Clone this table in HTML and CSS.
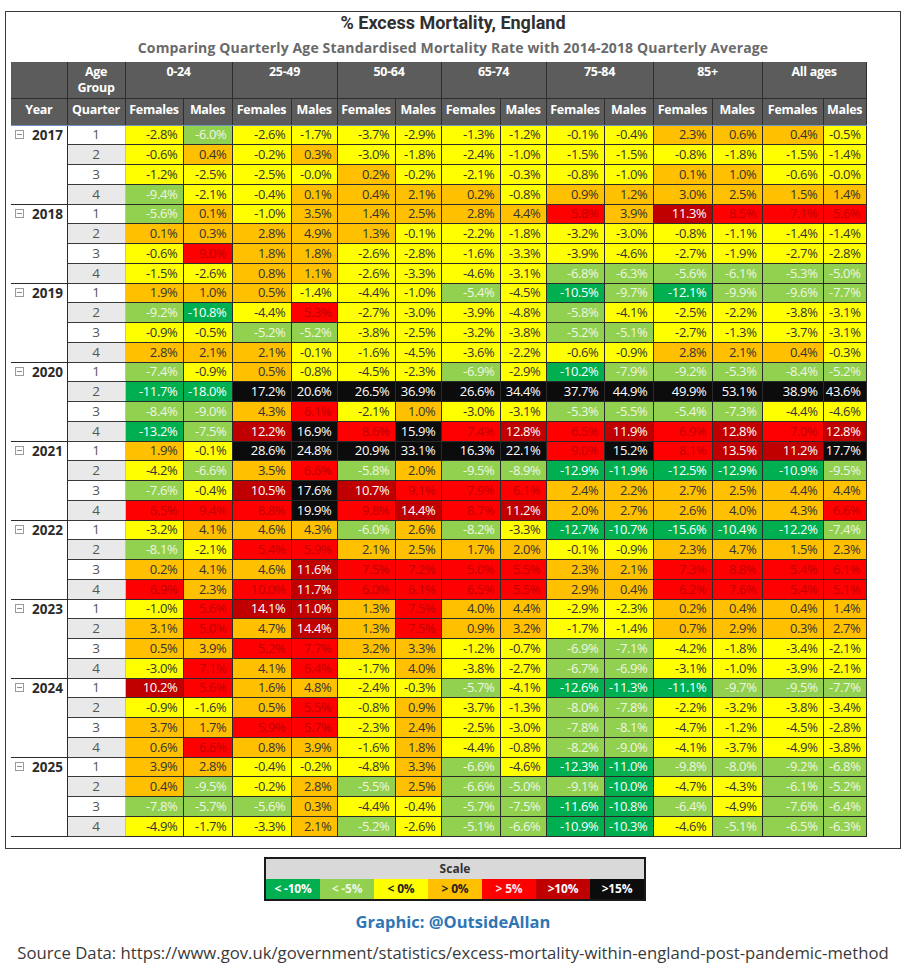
FILE: index.html
```html
<!DOCTYPE html>
<html lang="en">
<head>
<meta charset="utf-8">
<title>% Excess Mortality, England</title>
<link rel="stylesheet" href="styles.css">
</head>
<body>
<div class="page">
  <div class="frame">
    <div class="title">% Excess Mortality, England</div>
    <div class="subtitle">Comparing Quarterly Age Standardised Mortality Rate with 2014-2018 Quarterly Average</div>
    <table class="grid">
      <colgroup>
        <col class="c-year"><col class="c-qtr">
        <col class="w58"><col class="w49">
        <col class="w59"><col class="w46">
        <col class="w58"><col class="w46">
        <col class="w59"><col class="w46">
        <col class="w58"><col class="w49">
        <col class="w59"><col class="w50">
        <col class="w61"><col class="w43">
      </colgroup>
      <thead>
        <tr class="h1">
          <th class="blank"></th><th>Age<br>Group</th>
          <th colspan="2">0-24</th><th colspan="2">25-49</th><th colspan="2">50-64</th>
          <th colspan="2">65-74</th><th colspan="2">75-84</th><th colspan="2">85+</th><th colspan="2">All ages</th>
        </tr>
        <tr class="h2">
          <th class="blank2">Year</th><th>Quarter</th>
          <th>Females</th><th>Males</th><th>Females</th><th>Males</th><th>Females</th><th>Males</th>
          <th>Females</th><th>Males</th><th>Females</th><th>Males</th><th>Females</th><th>Males</th><th>Females</th><th>Males</th>
        </tr>
      </thead>
      <tbody>
        <tr class="first"><td class="yr" rowspan="4"><span class="tog"><svg width="9" height="9" viewBox="0 0 9 9"><rect x="0.5" y="0.5" width="8" height="8" fill="none" stroke="#9a9a9a"/><line x1="2" y1="4.5" x2="7" y2="4.5" stroke="#8a8a8a"/></svg></span>2017</td><td class="qt">1</td><td class="y">-2.8%</td><td class="g1">-6.0%</td><td class="y">-2.6%</td><td class="y">-1.7%</td><td class="y">-3.7%</td><td class="y">-2.9%</td><td class="y">-1.3%</td><td class="y">-1.2%</td><td class="y">-0.1%</td><td class="y">-0.4%</td><td class="o">2.3%</td><td class="o">0.6%</td><td class="o">0.4%</td><td class="y">-0.5%</td></tr>
        <tr><td class="qt alt">2</td><td class="y">-0.6%</td><td class="o">0.4%</td><td class="y">-0.2%</td><td class="o">0.3%</td><td class="y">-3.0%</td><td class="y">-1.8%</td><td class="y">-2.4%</td><td class="y">-1.0%</td><td class="y">-1.5%</td><td class="y">-1.5%</td><td class="y">-0.8%</td><td class="y">-1.8%</td><td class="y">-1.5%</td><td class="y">-1.4%</td></tr>
        <tr><td class="qt">3</td><td class="y">-1.2%</td><td class="y">-2.5%</td><td class="y">-2.5%</td><td class="y">-0.0%</td><td class="o">0.2%</td><td class="y">-0.2%</td><td class="y">-2.1%</td><td class="y">-0.3%</td><td class="y">-0.8%</td><td class="y">-1.0%</td><td class="o">0.1%</td><td class="o">1.0%</td><td class="y">-0.6%</td><td class="y">-0.0%</td></tr>
        <tr class="last"><td class="qt alt">4</td><td class="g1">-9.4%</td><td class="y">-2.1%</td><td class="y">-0.4%</td><td class="o">0.1%</td><td class="o">0.4%</td><td class="o">2.1%</td><td class="o">0.2%</td><td class="y">-0.8%</td><td class="o">0.9%</td><td class="o">1.2%</td><td class="o">3.0%</td><td class="o">2.5%</td><td class="o">1.5%</td><td class="o">1.4%</td></tr>

        <tr><td class="yr" rowspan="4"><span class="tog"><svg width="9" height="9" viewBox="0 0 9 9"><rect x="0.5" y="0.5" width="8" height="8" fill="none" stroke="#9a9a9a"/><line x1="2" y1="4.5" x2="7" y2="4.5" stroke="#8a8a8a"/></svg></span>2018</td><td class="qt">1</td><td class="g1">-5.6%</td><td class="o">0.1%</td><td class="y">-1.0%</td><td class="o">3.5%</td><td class="o">1.4%</td><td class="o">2.5%</td><td class="o">2.8%</td><td class="o">4.4%</td><td class="r">5.8%</td><td class="o">3.9%</td><td class="dr">11.3%</td><td class="r">8.5%</td><td class="r">7.1%</td><td class="r">5.6%</td></tr>
        <tr><td class="qt alt">2</td><td class="o">0.1%</td><td class="o">0.3%</td><td class="o">2.8%</td><td class="o">4.9%</td><td class="o">1.3%</td><td class="y">-0.1%</td><td class="y">-2.2%</td><td class="y">-1.8%</td><td class="y">-3.2%</td><td class="y">-3.0%</td><td class="y">-0.8%</td><td class="y">-1.1%</td><td class="y">-1.4%</td><td class="y">-1.4%</td></tr>
        <tr><td class="qt">3</td><td class="y">-0.6%</td><td class="r">9.0%</td><td class="o">1.8%</td><td class="o">1.8%</td><td class="y">-2.6%</td><td class="y">-2.8%</td><td class="y">-1.6%</td><td class="y">-3.3%</td><td class="y">-3.9%</td><td class="y">-4.6%</td><td class="y">-2.7%</td><td class="y">-1.9%</td><td class="y">-2.7%</td><td class="y">-2.8%</td></tr>
        <tr class="last"><td class="qt alt">4</td><td class="y">-1.5%</td><td class="y">-2.6%</td><td class="o">0.8%</td><td class="o">1.1%</td><td class="y">-2.6%</td><td class="y">-3.3%</td><td class="y">-4.6%</td><td class="y">-3.1%</td><td class="g1">-6.8%</td><td class="g1">-6.3%</td><td class="g1">-5.6%</td><td class="g1">-6.1%</td><td class="g1">-5.3%</td><td class="g1">-5.0%</td></tr>

        <tr><td class="yr" rowspan="4"><span class="tog"><svg width="9" height="9" viewBox="0 0 9 9"><rect x="0.5" y="0.5" width="8" height="8" fill="none" stroke="#9a9a9a"/><line x1="2" y1="4.5" x2="7" y2="4.5" stroke="#8a8a8a"/></svg></span>2019</td><td class="qt">1</td><td class="o">1.9%</td><td class="o">1.0%</td><td class="o">0.5%</td><td class="y">-1.4%</td><td class="y">-4.4%</td><td class="y">-1.0%</td><td class="g1">-5.4%</td><td class="y">-4.5%</td><td class="g2">-10.5%</td><td class="g1">-9.7%</td><td class="g2">-12.1%</td><td class="g1">-9.9%</td><td class="g1">-9.6%</td><td class="g1">-7.7%</td></tr>
        <tr><td class="qt alt">2</td><td class="g1">-9.2%</td><td class="g2">-10.8%</td><td class="y">-4.4%</td><td class="r">5.3%</td><td class="y">-2.7%</td><td class="y">-3.0%</td><td class="y">-3.9%</td><td class="y">-4.8%</td><td class="g1">-5.8%</td><td class="y">-4.1%</td><td class="y">-2.5%</td><td class="y">-2.2%</td><td class="y">-3.8%</td><td class="y">-3.1%</td></tr>
        <tr><td class="qt">3</td><td class="y">-0.9%</td><td class="y">-0.5%</td><td class="g1">-5.2%</td><td class="g1">-5.2%</td><td class="y">-3.8%</td><td class="y">-2.5%</td><td class="y">-3.2%</td><td class="y">-3.8%</td><td class="g1">-5.2%</td><td class="g1">-5.1%</td><td class="y">-2.7%</td><td class="y">-1.3%</td><td class="y">-3.7%</td><td class="y">-3.1%</td></tr>
        <tr class="last"><td class="qt alt">4</td><td class="o">2.8%</td><td class="o">2.1%</td><td class="o">2.1%</td><td class="y">-0.1%</td><td class="y">-1.6%</td><td class="y">-4.5%</td><td class="y">-3.6%</td><td class="y">-2.2%</td><td class="y">-0.6%</td><td class="y">-0.9%</td><td class="o">2.8%</td><td class="o">2.1%</td><td class="o">0.4%</td><td class="y">-0.3%</td></tr>

        <tr><td class="yr" rowspan="4"><span class="tog"><svg width="9" height="9" viewBox="0 0 9 9"><rect x="0.5" y="0.5" width="8" height="8" fill="none" stroke="#9a9a9a"/><line x1="2" y1="4.5" x2="7" y2="4.5" stroke="#8a8a8a"/></svg></span>2020</td><td class="qt">1</td><td class="g1">-7.4%</td><td class="y">-0.9%</td><td class="o">0.5%</td><td class="y">-0.8%</td><td class="y">-4.5%</td><td class="y">-2.3%</td><td class="g1">-6.9%</td><td class="y">-2.9%</td><td class="g2">-10.2%</td><td class="g1">-7.9%</td><td class="g1">-9.2%</td><td class="g1">-5.3%</td><td class="g1">-8.4%</td><td class="g1">-5.2%</td></tr>
        <tr><td class="qt alt">2</td><td class="g2">-11.7%</td><td class="g2">-18.0%</td><td class="k">17.2%</td><td class="k">20.6%</td><td class="k">26.5%</td><td class="k">36.9%</td><td class="k">26.6%</td><td class="k">34.4%</td><td class="k">37.7%</td><td class="k">44.9%</td><td class="k">49.9%</td><td class="k">53.1%</td><td class="k">38.9%</td><td class="k">43.6%</td></tr>
        <tr><td class="qt">3</td><td class="g1">-8.4%</td><td class="g1">-9.0%</td><td class="o">4.3%</td><td class="r">6.1%</td><td class="y">-2.1%</td><td class="o">1.0%</td><td class="y">-3.0%</td><td class="y">-3.1%</td><td class="g1">-5.3%</td><td class="g1">-5.5%</td><td class="g1">-5.4%</td><td class="g1">-7.3%</td><td class="y">-4.4%</td><td class="y">-4.6%</td></tr>
        <tr class="last"><td class="qt alt">4</td><td class="g2">-13.2%</td><td class="g1">-7.5%</td><td class="dr">12.2%</td><td class="k">16.9%</td><td class="r">8.6%</td><td class="k">15.9%</td><td class="r">7.4%</td><td class="dr">12.8%</td><td class="r">6.5%</td><td class="dr">11.9%</td><td class="r">6.9%</td><td class="dr">12.8%</td><td class="r">7.0%</td><td class="dr">12.8%</td></tr>

        <tr><td class="yr" rowspan="4"><span class="tog"><svg width="9" height="9" viewBox="0 0 9 9"><rect x="0.5" y="0.5" width="8" height="8" fill="none" stroke="#9a9a9a"/><line x1="2" y1="4.5" x2="7" y2="4.5" stroke="#8a8a8a"/></svg></span>2021</td><td class="qt">1</td><td class="o">1.9%</td><td class="y">-0.1%</td><td class="k">28.6%</td><td class="k">24.8%</td><td class="k">20.9%</td><td class="k">33.1%</td><td class="k">16.3%</td><td class="k">22.1%</td><td class="r">9.0%</td><td class="k">15.2%</td><td class="r">8.1%</td><td class="dr">13.5%</td><td class="dr">11.2%</td><td class="k">17.7%</td></tr>
        <tr><td class="qt alt">2</td><td class="y">-4.2%</td><td class="g1">-6.6%</td><td class="o">3.5%</td><td class="r">6.6%</td><td class="g1">-5.8%</td><td class="o">2.0%</td><td class="g1">-9.5%</td><td class="g1">-8.9%</td><td class="g2">-12.9%</td><td class="g2">-11.9%</td><td class="g2">-12.5%</td><td class="g2">-12.9%</td><td class="g2">-10.9%</td><td class="g1">-9.5%</td></tr>
        <tr><td class="qt">3</td><td class="g1">-7.6%</td><td class="y">-0.4%</td><td class="dr">10.5%</td><td class="k">17.6%</td><td class="dr">10.7%</td><td class="r">9.1%</td><td class="r">7.9%</td><td class="r">6.1%</td><td class="o">2.4%</td><td class="o">2.2%</td><td class="o">2.7%</td><td class="o">2.5%</td><td class="o">4.4%</td><td class="o">4.4%</td></tr>
        <tr class="last"><td class="qt alt">4</td><td class="r">6.5%</td><td class="r">9.4%</td><td class="r">8.8%</td><td class="k">19.9%</td><td class="r">9.8%</td><td class="dr">14.4%</td><td class="r">8.7%</td><td class="dr">11.2%</td><td class="o">2.0%</td><td class="o">2.7%</td><td class="o">2.6%</td><td class="o">4.0%</td><td class="o">4.3%</td><td class="r">6.6%</td></tr>

        <tr><td class="yr" rowspan="4"><span class="tog"><svg width="9" height="9" viewBox="0 0 9 9"><rect x="0.5" y="0.5" width="8" height="8" fill="none" stroke="#9a9a9a"/><line x1="2" y1="4.5" x2="7" y2="4.5" stroke="#8a8a8a"/></svg></span>2022</td><td class="qt">1</td><td class="y">-3.2%</td><td class="o">4.1%</td><td class="o">4.6%</td><td class="o">4.3%</td><td class="g1">-6.0%</td><td class="o">2.6%</td><td class="g1">-8.2%</td><td class="y">-3.3%</td><td class="g2">-12.7%</td><td class="g2">-10.7%</td><td class="g2">-15.6%</td><td class="g2">-10.4%</td><td class="g2">-12.2%</td><td class="g1">-7.4%</td></tr>
        <tr><td class="qt alt">2</td><td class="g1">-8.1%</td><td class="y">-2.1%</td><td class="r">5.4%</td><td class="r">5.9%</td><td class="o">2.1%</td><td class="o">2.5%</td><td class="o">1.7%</td><td class="o">2.0%</td><td class="y">-0.1%</td><td class="y">-0.9%</td><td class="o">2.3%</td><td class="o">4.7%</td><td class="o">1.5%</td><td class="o">2.3%</td></tr>
        <tr><td class="qt">3</td><td class="o">0.2%</td><td class="o">4.1%</td><td class="o">4.6%</td><td class="dr">11.6%</td><td class="r">7.5%</td><td class="r">7.2%</td><td class="r">5.0%</td><td class="r">5.5%</td><td class="o">2.3%</td><td class="o">2.1%</td><td class="r">7.3%</td><td class="r">8.8%</td><td class="r">5.4%</td><td class="r">6.1%</td></tr>
        <tr class="last"><td class="qt alt">4</td><td class="r">6.9%</td><td class="o">2.3%</td><td class="r">10.0%</td><td class="dr">11.7%</td><td class="r">6.0%</td><td class="r">6.1%</td><td class="r">6.5%</td><td class="r">5.5%</td><td class="o">2.9%</td><td class="o">0.4%</td><td class="r">6.2%</td><td class="r">7.6%</td><td class="r">5.4%</td><td class="r">5.1%</td></tr>

        <tr><td class="yr" rowspan="4"><span class="tog"><svg width="9" height="9" viewBox="0 0 9 9"><rect x="0.5" y="0.5" width="8" height="8" fill="none" stroke="#9a9a9a"/><line x1="2" y1="4.5" x2="7" y2="4.5" stroke="#8a8a8a"/></svg></span>2023</td><td class="qt">1</td><td class="y">-1.0%</td><td class="r">5.6%</td><td class="dr">14.1%</td><td class="dr">11.0%</td><td class="o">1.3%</td><td class="r">7.5%</td><td class="o">4.0%</td><td class="o">4.4%</td><td class="y">-2.9%</td><td class="y">-2.3%</td><td class="o">0.2%</td><td class="o">0.4%</td><td class="o">0.4%</td><td class="o">1.4%</td></tr>
        <tr><td class="qt alt">2</td><td class="o">3.1%</td><td class="r">5.0%</td><td class="o">4.7%</td><td class="dr">14.4%</td><td class="o">1.3%</td><td class="r">7.5%</td><td class="o">0.9%</td><td class="o">3.2%</td><td class="y">-1.7%</td><td class="y">-1.4%</td><td class="o">0.7%</td><td class="o">2.9%</td><td class="o">0.3%</td><td class="o">2.7%</td></tr>
        <tr><td class="qt">3</td><td class="o">0.5%</td><td class="o">3.9%</td><td class="r">5.2%</td><td class="r">7.7%</td><td class="o">3.2%</td><td class="o">3.3%</td><td class="y">-1.2%</td><td class="y">-0.7%</td><td class="g1">-6.9%</td><td class="g1">-7.1%</td><td class="y">-4.2%</td><td class="y">-1.8%</td><td class="y">-3.4%</td><td class="y">-2.1%</td></tr>
        <tr class="last"><td class="qt alt">4</td><td class="y">-3.0%</td><td class="r">7.1%</td><td class="o">4.1%</td><td class="r">6.4%</td><td class="y">-1.7%</td><td class="o">4.0%</td><td class="y">-3.8%</td><td class="y">-2.7%</td><td class="g1">-6.7%</td><td class="g1">-6.9%</td><td class="y">-3.1%</td><td class="y">-1.0%</td><td class="y">-3.9%</td><td class="y">-2.1%</td></tr>

        <tr><td class="yr" rowspan="4"><span class="tog"><svg width="9" height="9" viewBox="0 0 9 9"><rect x="0.5" y="0.5" width="8" height="8" fill="none" stroke="#9a9a9a"/><line x1="2" y1="4.5" x2="7" y2="4.5" stroke="#8a8a8a"/></svg></span>2024</td><td class="qt">1</td><td class="dr">10.2%</td><td class="r">5.6%</td><td class="o">1.6%</td><td class="o">4.8%</td><td class="y">-2.4%</td><td class="y">-0.3%</td><td class="g1">-5.7%</td><td class="y">-4.1%</td><td class="g2">-12.6%</td><td class="g2">-11.3%</td><td class="g2">-11.1%</td><td class="g1">-9.7%</td><td class="g1">-9.5%</td><td class="g1">-7.7%</td></tr>
        <tr><td class="qt alt">2</td><td class="y">-0.9%</td><td class="y">-1.6%</td><td class="o">0.5%</td><td class="r">5.5%</td><td class="y">-0.8%</td><td class="o">0.9%</td><td class="y">-3.7%</td><td class="y">-1.3%</td><td class="g1">-8.0%</td><td class="g1">-7.8%</td><td class="y">-2.2%</td><td class="y">-3.2%</td><td class="y">-3.8%</td><td class="y">-3.4%</td></tr>
        <tr><td class="qt">3</td><td class="o">3.7%</td><td class="o">1.7%</td><td class="r">5.9%</td><td class="r">5.7%</td><td class="y">-2.3%</td><td class="o">2.4%</td><td class="y">-2.5%</td><td class="y">-3.0%</td><td class="g1">-7.8%</td><td class="g1">-8.1%</td><td class="y">-4.7%</td><td class="y">-1.2%</td><td class="y">-4.5%</td><td class="y">-2.8%</td></tr>
        <tr class="last"><td class="qt alt">4</td><td class="o">0.6%</td><td class="r">6.6%</td><td class="o">0.8%</td><td class="o">3.9%</td><td class="y">-1.6%</td><td class="o">1.8%</td><td class="y">-4.4%</td><td class="y">-0.8%</td><td class="g1">-8.2%</td><td class="g1">-9.0%</td><td class="y">-4.1%</td><td class="y">-3.7%</td><td class="y">-4.9%</td><td class="y">-3.8%</td></tr>

        <tr><td class="yr" rowspan="4"><span class="tog"><svg width="9" height="9" viewBox="0 0 9 9"><rect x="0.5" y="0.5" width="8" height="8" fill="none" stroke="#9a9a9a"/><line x1="2" y1="4.5" x2="7" y2="4.5" stroke="#8a8a8a"/></svg></span>2025</td><td class="qt">1</td><td class="o">3.9%</td><td class="o">2.8%</td><td class="y">-0.4%</td><td class="y">-0.2%</td><td class="y">-4.8%</td><td class="o">3.3%</td><td class="g1">-6.6%</td><td class="y">-4.6%</td><td class="g2">-12.3%</td><td class="g2">-11.0%</td><td class="g1">-9.8%</td><td class="g1">-8.0%</td><td class="g1">-9.2%</td><td class="g1">-6.8%</td></tr>
        <tr><td class="qt alt">2</td><td class="o">0.4%</td><td class="g1">-9.5%</td><td class="y">-0.2%</td><td class="o">2.8%</td><td class="g1">-5.5%</td><td class="o">2.5%</td><td class="g1">-6.6%</td><td class="g1">-5.0%</td><td class="g1">-9.1%</td><td class="g2">-10.0%</td><td class="y">-4.7%</td><td class="y">-4.3%</td><td class="g1">-6.1%</td><td class="g1">-5.2%</td></tr>
        <tr><td class="qt">3</td><td class="g1">-7.8%</td><td class="g1">-5.7%</td><td class="g1">-5.6%</td><td class="o">0.3%</td><td class="y">-4.4%</td><td class="y">-0.4%</td><td class="g1">-5.7%</td><td class="g1">-7.5%</td><td class="g2">-11.6%</td><td class="g2">-10.8%</td><td class="g1">-6.4%</td><td class="y">-4.9%</td><td class="g1">-7.6%</td><td class="g1">-6.4%</td></tr>
        <tr class="end"><td class="qt alt">4</td><td class="y">-4.9%</td><td class="y">-1.7%</td><td class="y">-3.3%</td><td class="o">2.1%</td><td class="g1">-5.2%</td><td class="y">-2.6%</td><td class="g1">-5.1%</td><td class="g1">-6.6%</td><td class="g2">-10.9%</td><td class="g2">-10.3%</td><td class="y">-4.6%</td><td class="g1">-5.1%</td><td class="g1">-6.5%</td><td class="g1">-6.3%</td></tr>
      </tbody>
    </table>
  </div>

  <div class="legend">
    <div class="legend-head">Scale</div>
    <div class="legend-row">
      <span class="lg-g2">&lt; -10%</span>
      <span class="lg-g1">&lt; -5%</span>
      <span class="lg-y">&lt; 0%</span>
      <span class="lg-o">&gt; 0%</span>
      <span class="lg-r">&gt; 5%</span>
      <span class="lg-dr">&gt;10%</span>
      <span class="lg-k">&gt;15%</span>
    </div>
  </div>

  <div class="credit">Graphic: @OutsideAllan</div>
  <div class="source">Source Data: https://www.gov.uk/government/statistics/excess-mortality-within-england-post-pandemic-method</div>
</div>
</body>
</html>
```

FILE: styles.css
```css
* { box-sizing: border-box; }

html, body {
  margin: 0;
  padding: 0;
  background: #ffffff;
}

body {
  font-family: "Segoe UI", "Open Sans", "Liberation Sans", sans-serif;
  color: #333333;
}

.page {
  width: 906px;
  padding: 11px 5px 0 5px;
}

.frame {
  width: 896px;
  height: 838px;
  border: 1px solid #3a3a3a;
  padding: 0 0 0 5px;
}

.title {
  font-family: Roboto, "DejaVu Sans", sans-serif;
  font-weight: 700;
  font-size: 18px;
  line-height: 22px;
  text-align: center;
  color: #303030;
  padding-right: 5px;
}

.subtitle {
  font-family: "Open Sans", "Liberation Sans", sans-serif;
  font-weight: 700;
  font-size: 14px;
  letter-spacing: 0.15px;
  line-height: 20px;
  margin-top: 4px;
  text-align: center;
  color: #6a6a6a;
  padding-right: 5px;
}

.grid {
  margin-top: 4px;
  width: 855px;
  table-layout: fixed;
  border-collapse: collapse;
  font-family: "Open Sans", "Liberation Sans", sans-serif;
  font-size: 13px;
}

.c-year { width: 56px; }
.c-qtr { width: 58px; }
.w58 { width: 58px; }
.w49 { width: 49px; }
.w59 { width: 59px; }
.w46 { width: 46px; }
.w50 { width: 50px; }
.w61 { width: 61px; }
.w43 { width: 43px; }

.grid th {
  background: #5c5c5c;
  color: #ffffff;
  font-weight: 700;
  font-size: 12.5px;
  padding: 0;
  border: 1px solid #2e2e2e;
  border-top: none;
  white-space: nowrap;
  letter-spacing: -0.3px;
}

.grid .h1 th {
  height: 36px;
  vertical-align: top;
  line-height: 16px;
  padding-top: 2px;
}

.grid .h2 th {
  height: 27px;
  vertical-align: middle;
  line-height: 16px;
  padding-bottom: 3px;
  border-bottom: 1px solid #6f92be;
}

.grid th.blank,
.grid th.blank2 {
  border-left: none;
}

.grid tbody tr {
  height: 19.75px;
}

.grid td {
  padding: 0 5px 0 0;
  line-height: 17px;
  text-align: right;
  border: 1px solid #2a2a2a;
  white-space: nowrap;
  letter-spacing: -0.35px;
}

.grid td.yr {
  background: #ffffff;
  vertical-align: top;
  text-align: left;
  border-left: none;
  border-top: 1px solid #2a2a2a;
  border-bottom: 1px solid #2a2a2a;
  padding: 1px 0 0 4px;
  font-weight: 700;
  font-size: 13.5px;
  color: #2b2b2b;
  letter-spacing: 0;
}

.grid tr.first td.yr { border-top: 1px solid #6f92be; }

.tog {
  display: inline-block;
  width: 17px;
  vertical-align: top;
  padding-top: 3px;
}

.tog svg { display: block; }

.grid td.qt {
  background: #ffffff;
  color: #555555;
  text-align: center;
  padding: 0;
  font-size: 13.5px;
  border-color: #3a3a3a;
  border-right: 1px solid #a7c6e6;
  letter-spacing: 0;
}

.grid td.qt.alt { background: #e9e9e9; }

.grid td.y  { background: #ffff00; color: #333333; }
.grid td.o  { background: #ffc000; color: #333333; }
.grid td.r  { background: #ff0000; color: #c00000; }
.grid td.dr { background: #c00000; color: #ffffff; }
.grid td.k  { background: #0c0c0c; color: #ffffff; }
.grid td.g1 { background: #92d050; color: #eef6e4; }
.grid td.g2 { background: #00b050; color: #ffffff; }

.legend {
  width: 382px;
  margin: 8px auto 0 auto;
  border: 2px solid #1a1a1a;
  font-family: "Open Sans", "Liberation Sans", sans-serif;
  font-weight: 700;
  font-size: 12px;
  position: relative;
  left: 2px;
}

.legend-head {
  background: #d9d9d9;
  color: #333333;
  text-align: center;
  height: 20px;
  line-height: 20px;
}

.legend-row {
  display: flex;
}

.legend-row span {
  flex: 1 1 0;
  height: 20px;
  line-height: 20px;
  text-align: center;
  letter-spacing: -0.2px;
}

.lg-g2 { background: #00b050; color: #ffffff; }
.lg-g1 { background: #92d050; color: #eef6e4; }
.lg-y  { background: #ffff00; color: #222222; }
.lg-o  { background: #ffc000; color: #222222; }
.lg-r  { background: #ff0000; color: #ffe6e6; }
.lg-dr { background: #c00000; color: #ffffff; }
.lg-k  { background: #0c0c0c; color: #ffffff; }

.credit {
  margin-top: 10px;
  text-align: center;
  font-family: "Open Sans", "Liberation Sans", sans-serif;
  font-weight: 700;
  font-size: 16.5px;
  line-height: 22px;
  color: #2e75b6;
}

.source {
  margin-top: 9px;
  text-align: center;
  font-family: "Open Sans", "Liberation Sans", sans-serif;
  font-size: 16.7px;
  line-height: 22px;
  color: #3a3a3a;
  white-space: nowrap;
}
```
